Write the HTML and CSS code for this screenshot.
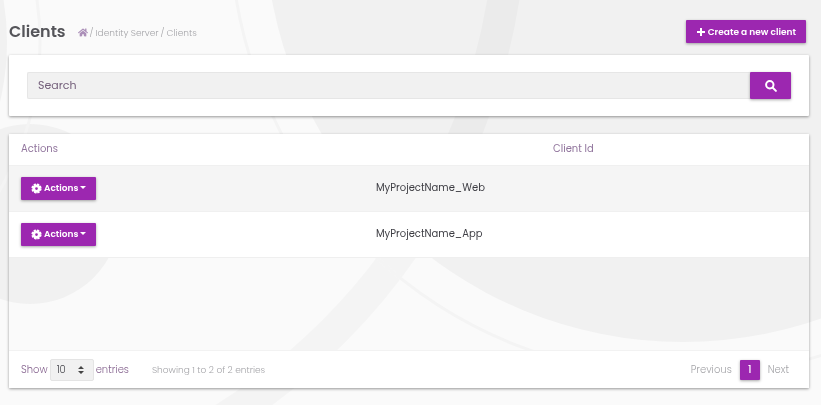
FILE: index.html
```html
<!DOCTYPE html>
<html lang="en">
<head>
<meta charset="utf-8">
<meta name="viewport" content="width=device-width, initial-scale=1">
<title>Clients</title>
<link rel="stylesheet" href="styles.css">
</head>
<body>
<svg class="backdrop" aria-hidden="true">
  <circle class="shape" cx="683" cy="-76" r="418"/>
  <circle class="shape" cx="30" cy="214" r="90"/>
  <circle class="shape" cx="-253" cy="42" r="260"/>
  <circle class="band" cx="-95" cy="-97" r="606"/>
  <circle class="line" cx="683" cy="-76" r="453"/>
  <circle class="line" cx="-253" cy="42" r="293"/>
</svg>
<main class="page">
  <header class="page-header">
    <h1 class="title">Clients</h1>
    <nav class="breadcrumb" aria-label="Breadcrumb">
      <a href="#" aria-label="Home"><svg class="home-icon" viewBox="0 0 576 512"><path d="M280 148 96 300v164a16 16 0 0 0 16 16l112-1a16 16 0 0 0 16-16v-95a16 16 0 0 1 16-16h64a16 16 0 0 1 16 16v95a16 16 0 0 0 16 16l112 1a16 16 0 0 0 16-16V300L296 148a12 12 0 0 0-16 0zm292 103-84-69V44a12 12 0 0 0-12-12h-56a12 12 0 0 0-12 12v72l-89-74a48 48 0 0 0-61 0L4 251a12 12 0 0 0-1 17l25 31a12 12 0 0 0 17 2L280 107a12 12 0 0 1 16 0l235 194a12 12 0 0 0 17-2l25-31a12 12 0 0 0-1-17z"/></svg></a>
      <span>/</span><a href="#">Identity Server</a><span>/</span><span>Clients</span>
    </nav>
    <button class="btn create" type="button"><svg class="plus-icon" viewBox="0 0 10 10"><path d="M4 1h2v3h3v2H6v3H4V6H1V4h3z"/></svg>Create a new client</button>
  </header>

  <form class="card search">
    <input class="search-input" type="text" placeholder="Search" aria-label="Search">
    <button class="btn search-btn" type="button" aria-label="Search"><svg class="search-icon" viewBox="0 0 12 12"><circle cx="4.8" cy="4.8" r="3.7"/><path d="m7.8 7.8 3.1 3.1"/></svg></button>
  </form>

  <section class="card list">
    <table class="clients">
      <colgroup><col class="col-actions"><col class="col-name"><col></colgroup>
      <thead>
        <tr><th colspan="2">Actions</th><th>Client Id</th></tr>
      </thead>
      <tbody>
        <tr>
          <td><button class="btn action" type="button"><svg class="gear-icon" viewBox="0 0 12 12"><circle class="teeth" cx="6" cy="6" r="4.6"/><circle class="ring" cx="6" cy="6" r="3"/></svg>Actions<span class="caret"></span></button></td>
          <td colspan="2">MyProjectName_Web</td>
        </tr>
        <tr>
          <td><button class="btn action" type="button"><svg class="gear-icon" viewBox="0 0 12 12"><circle class="teeth" cx="6" cy="6" r="4.6"/><circle class="ring" cx="6" cy="6" r="3"/></svg>Actions<span class="caret"></span></button></td>
          <td colspan="2">MyProjectName_App</td>
        </tr>
      </tbody>
    </table>
    <div class="blank"></div>
    <footer class="list-footer">
      <label class="length" for="length">Show
        <span class="select-box">
          <select id="length"><option>10</option><option>25</option><option>50</option></select>
          <svg class="sort-icon" viewBox="0 0 6 8"><path d="M3 0 6 3H0zM0 5h6L3 8z"/></svg>
        </span>
        entries</label>
      <span class="info">Showing 1 to 2 of 2 entries</span>
      <nav class="pager" aria-label="Pages">
        <a href="#">Previous</a><a class="current" href="#" aria-current="page">1</a><a href="#">Next</a>
      </nav>
    </footer>
  </section>
</main>
</body>
</html>
```
FILE: styles.css
```css
* { box-sizing: border-box; }

body {
  margin: 0;
  min-height: 100vh;
  background: #fafafa;
  color: #3e3e44;
  font: 10px/16px Poppins, Inter, sans-serif;
}

a { color: inherit; text-decoration: none; }
button, input, select { font: inherit; margin: 0; }

.backdrop {
  position: fixed;
  inset: 0;
  width: 100%;
  height: 100%;
  z-index: -1;
}
.shape { fill: #f1f1f1; }
.band { fill: none; stroke: rgba(0, 0, 0, .022); stroke-width: 32; }
.line { fill: none; stroke: #f4f4f4; stroke-width: 3; }

.page { padding: 8px 12px 17px 9px; }

.page-header {
  display: flex;
  align-items: center;
  height: 47px;
  padding-right: 3px;
}
.title { margin: 0; font-size: 16px; line-height: 24px; font-weight: 600; color: #55555a; }
.breadcrumb {
  display: flex;
  align-items: center;
  gap: 2px;
  margin-left: 12px;
  padding-top: 2px;
  font-size: 9px;
  font-weight: 300;
  color: #a4a4a8;
}
.breadcrumb a { display: flex; }
.home-icon { width: 10px; height: 9px; fill: #ab8fb8; }

.btn {
  display: inline-flex;
  align-items: center;
  justify-content: center;
  height: 23px;
  padding: 0 10px;
  border: 0;
  border-radius: 1px;
  background: #9c27b0;
  color: #fff;
  font-size: 9px;
  font-weight: 600;
  white-space: nowrap;
  box-shadow: 0 1px 3px rgba(0, 0, 0, .35);
}
.create { margin-left: auto; gap: 2px; }
.plus-icon { width: 10px; height: 10px; fill: #fff; }

.card { border-radius: 1px; box-shadow: 0 1px 3px rgba(0, 0, 0, .4); }

.search {
  display: flex;
  margin-bottom: 18px;
  padding: 17px 18px;
  background: #fff;
}
.search-input {
  flex: 1;
  min-width: 0;
  height: 27px;
  padding: 0 10px;
  border: 1px solid #e6e6e6;
  border-right: 0;
  border-radius: 2px 0 0 2px;
  background: #f1f1f1;
  color: #3e3e44;
  font-size: 11px;
}
.search-input::placeholder { color: #75617c; opacity: 1; }
.search-btn { width: 41px; height: 27px; padding: 0; }
.search-icon { width: 12px; height: 12px; fill: none; stroke: #fff; stroke-width: 2; stroke-linecap: round; }

.clients {
  width: 100%;
  table-layout: fixed;
  border-collapse: collapse;
  background: #fff;
}
.col-actions { width: 44%; }
.col-name { width: 22%; }
.clients th, .clients td { padding: 0 12px; text-align: left; }
.clients th:last-child { padding-left: 16px; }
.clients td:last-child { padding-left: 15px; }
.clients th { height: 31px; font-weight: 400; color: #91759d; }
.clients td { height: 46px; border-top: 1px solid #f0f0f0; }
.clients tbody tr:nth-child(odd) { background: #f5f5f5; }
.action { gap: 2px; vertical-align: middle; }
.gear-icon { width: 11px; height: 11px; fill: none; stroke: #fff; }
.teeth { stroke-width: 2; stroke-dasharray: 2.4 1.213; }
.ring { stroke-width: 3; }
.caret { margin-bottom: 2px; border: 3px solid transparent; border-top-color: #fff; border-bottom: 0; }

.blank { min-height: 93px; border-top: 1px solid #efefef; }

.list-footer {
  display: flex;
  align-items: center;
  height: 38px;
  padding: 0 12px;
  border-top: 1px solid #f2f2f2;
  background: #fff;
  font-weight: 300;
  color: #a4a4a8;
}
.length { display: flex; align-items: center; gap: 2px; color: #86648f; }
.select-box { position: relative; display: flex; }
.select-box select {
  width: 44px;
  height: 22px;
  padding: 0 6px;
  appearance: none;
  border: 1px solid #e4e4e4;
  border-radius: 2px;
  background: #f1f1f1;
  color: #3e3e44;
}
.sort-icon { position: absolute; top: 7px; right: 10px; width: 6px; height: 8px; fill: #444; pointer-events: none; }
.info { margin-left: 23px; font-size: 9px; }
.pager { display: flex; align-items: center; gap: 8px; margin-left: auto; padding-right: 8px; }
.current {
  width: 20px;
  line-height: 20px;
  border-radius: 1px;
  background: #9c27b0;
  color: #fff;
  font-weight: 500;
  text-align: center;
  box-shadow: 0 1px 3px rgba(0, 0, 0, .35);
}
```
